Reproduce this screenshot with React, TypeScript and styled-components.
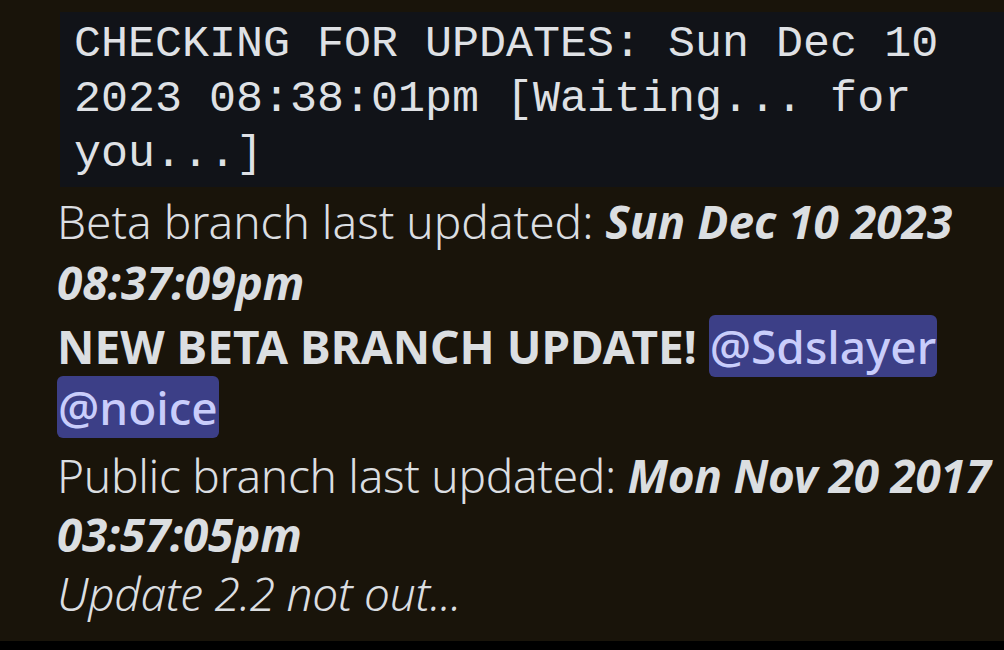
import styled, { createGlobalStyle } from "styled-components";

const GlobalStyle = createGlobalStyle`
  html, body {
    margin: 0;
    padding: 0;
    background: #000;
  }
`;

const Page = styled.div`
  box-sizing: border-box;
  height: 641px;
  overflow: hidden;
  padding: 12px 0 0 57px;
  background: #19140a;
  color: #dbdee1;
  font-family: "Noto Sans", "Open Sans", sans-serif;
`;

const CodeBlock = styled.pre`
  margin: 0 0 0 3px;
  padding: 5px 0 5px 14px;
  background: #111318;
  color: #dfe1e5;
  font-family: "Liberation Mono", "Courier New", monospace;
  font-size: 45px;
  line-height: 55px;
  white-space: pre-wrap;
`;

const Line = styled.div<{ $tight?: boolean; $gap?: number }>`
  font-size: 46px;
  line-height: ${(p) => (p.$tight ? 59 : 61)}px;
  font-weight: 300;
  margin-top: ${(p) => p.$gap ?? 0}px;
  letter-spacing: ${(p) => (p.$tight ? "-0.3px" : "0")};
`;

const Stamp = styled.strong`
  font-weight: 700;
  font-style: italic;
`;

const Shout = styled.strong`
  font-weight: 700;
`;

const Note = styled.em`
  font-style: italic;
  font-weight: 300;
`;

const Mention = styled.span`
  padding: 0 1px;
  border-radius: 6px;
  background: #3c3f87;
  color: #c9cdfb;
  font-weight: 500;
`;

export default function App() {
  return (
    <>
      <GlobalStyle />
      <Page>
        <CodeBlock>
          CHECKING FOR UPDATES: Sun Dec 10 2023 08:38:01pm [Waiting... for you...]
        </CodeBlock>
        <Line $gap={4}>
          Beta branch last updated: <Stamp>Sun Dec 10 2023 08:37:09pm</Stamp>
        </Line>
        <Line $gap={3}>
          <Shout>NEW BETA BRANCH UPDATE!</Shout> <Mention>@Sdslayer</Mention>{" "}
          <Mention>@noice</Mention>
        </Line>
        <Line $tight $gap={8}>
          Public branch last updated: <Stamp>Mon Nov 20 2017 03:57:05pm</Stamp>
        </Line>
        <Line $tight>
          <Note>Update 2.2 not out...</Note>
        </Line>
      </Page>
    </>
  );
}
